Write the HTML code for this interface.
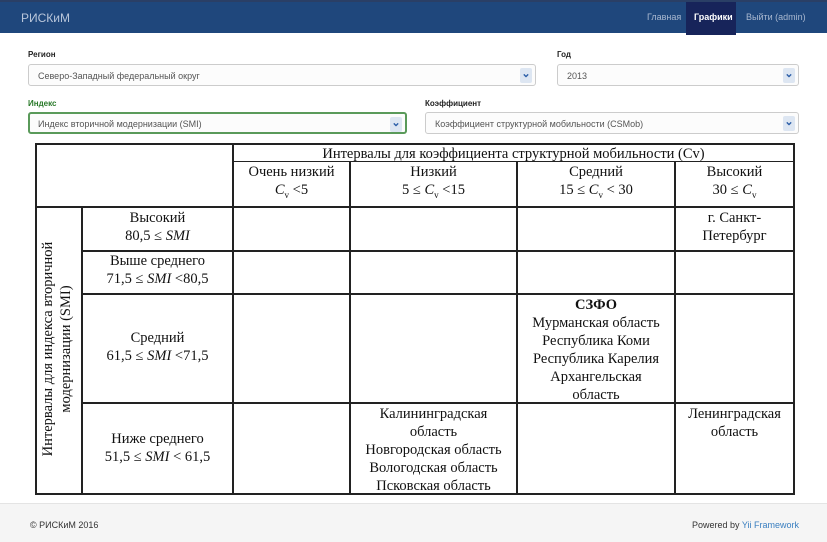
<!DOCTYPE html>
<html><head><meta charset="utf-8">
<style>
*{box-sizing:border-box;margin:0;padding:0}
body{width:827px;height:542px;overflow:hidden;background:#fff;font-family:"Liberation Sans",sans-serif;position:relative}
.nav{position:absolute;left:0;top:0;width:827px;height:33px;background:#1f477c;border-top:2px solid #2a3f66}
.brand{position:absolute;left:21px;top:9px;color:#b9c6da;font-size:12px}
.nl{position:absolute;top:10px;color:#a9b8d0;font-size:9px}
.act{position:absolute;left:686px;top:0;width:50px;height:33px;background:#17245a}
.lbl{position:absolute;font-size:8px;font-weight:bold;color:#222}
.sel{position:absolute;height:22px;border:1px solid #ccc;border-radius:3px;background:#fcfcfc;font-size:9px;color:#555;padding:6px 9px}
.arr{position:absolute;right:3px;top:3px;width:12px;height:15px;background:#dde6f2;border-radius:2px;color:#2d5fa8;font-size:11px;font-weight:bold;text-align:center;line-height:12px}
.c{position:absolute;font-family:"Liberation Serif",serif;font-size:14.5px;line-height:18px;color:#111;text-align:center}
.l{position:absolute;background:#222}
i{font-style:italic}
.foot{position:absolute;left:0;top:503px;width:827px;height:39px;background:#f5f5f5;border-top:1px solid #e4e4e4;font-size:9px;color:#333}
</style></head><body>
<div class="nav">
<div class="brand">РИСКиМ</div>
<div class="act"></div>
<div class="nl" style="left:647px">Главная</div>
<div class="nl" style="left:694px;color:#fff;font-weight:bold">Графики</div>
<div class="nl" style="left:746px">Выйти (admin)</div>
</div>
<div class="lbl" style="left:28px;top:50px">Регион</div>
<div class="sel" style="left:28px;top:64px;width:508px">Северо-Западный федеральный округ<div class="arr">&#8964;</div></div>
<div class="lbl" style="left:557px;top:50px">Год</div>
<div class="sel" style="left:557px;top:64px;width:242px">2013<div class="arr">&#8964;</div></div>
<div class="lbl" style="left:28px;top:99px;color:#2a7a2a">Индекс</div>
<div class="sel" style="left:28px;top:112px;width:379px;border:2px solid #5a9a5a;padding:5px 8px">Индекс вторичной модернизации (SMI)<div class="arr">&#8964;</div></div>
<div class="lbl" style="left:425px;top:99px">Коэффициент</div>
<div class="sel" style="left:425px;top:112px;width:374px">Коэффициент структурной мобильности (CSMob)<div class="arr">&#8964;</div></div>

<div class="l" style="left:35px;top:143px;width:760px;height:2px"></div>
<div class="l" style="left:233px;top:161px;width:562px;height:1px"></div>
<div class="l" style="left:35px;top:206px;width:760px;height:2px"></div>
<div class="l" style="left:81px;top:250px;width:714px;height:1.5px"></div>
<div class="l" style="left:81px;top:293px;width:714px;height:1.5px"></div>
<div class="l" style="left:81px;top:402px;width:714px;height:1.5px"></div>
<div class="l" style="left:35px;top:493px;width:760px;height:2px"></div>
<div class="l" style="left:35px;top:143px;width:2px;height:352px"></div>
<div class="l" style="left:81px;top:207px;width:1.5px;height:288px"></div>
<div class="l" style="left:232px;top:143px;width:1.5px;height:352px"></div>
<div class="l" style="left:349px;top:161px;width:1.5px;height:334px"></div>
<div class="l" style="left:516px;top:161px;width:1.5px;height:334px"></div>
<div class="l" style="left:674px;top:161px;width:1.5px;height:334px"></div>
<div class="l" style="left:793px;top:143px;width:2px;height:352px"></div>

<div class="c" style="left:234px;top:145px;width:559px">Интервалы для коэффициента структурной мобильности (Cv)</div>
<div class="c" style="left:234px;top:163px;width:115px">Очень низкий<br><i>C</i><sub style="font-size:9px">v</sub> &lt;5</div>
<div class="c" style="left:351px;top:163px;width:165px">Низкий<br>5 ≤ <i>C</i><sub style="font-size:9px">v</sub> &lt;15</div>
<div class="c" style="left:518px;top:163px;width:156px">Средний<br>15 ≤ <i>C</i><sub style="font-size:9px">v</sub> &lt; 30</div>
<div class="c" style="left:676px;top:163px;width:117px">Высокий<br>30 ≤ <i>C</i><sub style="font-size:9px">v</sub></div>

<div class="c" style="left:83px;top:209px;width:149px">Высокий<br>80,5 ≤ <i>SMI</i></div>
<div class="c" style="left:83px;top:252px;width:149px">Выше среднего<br>71,5 ≤ <i>SMI</i> &lt;80,5</div>
<div class="c" style="left:83px;top:329px;width:149px">Средний<br>61,5 ≤ <i>SMI</i> &lt;71,5</div>
<div class="c" style="left:83px;top:430px;width:149px">Ниже среднего<br>51,5 ≤ <i>SMI</i> &lt; 61,5</div>

<div class="c" style="left:676px;top:209px;width:117px">г. Санкт-<br>Петербург</div>
<div class="c" style="left:518px;top:296px;width:156px"><b>СЗФО</b><br>Мурманская область<br>Республика Коми<br>Республика Карелия<br>Архангельская<br>область</div>
<div class="c" style="left:351px;top:405px;width:165px">Калининградская<br>область<br>Новгородская область<br>Вологодская область<br>Псковская область</div>
<div class="c" style="left:676px;top:405px;width:117px">Ленинградская<br>область</div>

<div class="c" style="left:-87px;top:331px;width:288px;transform:rotate(-90deg);transform-origin:center">Интервалы для индекса вторичной<br>модернизации (SMI)</div>

<div class="foot">
<div style="position:absolute;left:30px;top:16px">© РИСКиМ 2016</div>
<div style="position:absolute;right:28px;top:16px">Powered by <span style="color:#3a7fc0">Yii Framework</span></div>
</div>
</body></html>
